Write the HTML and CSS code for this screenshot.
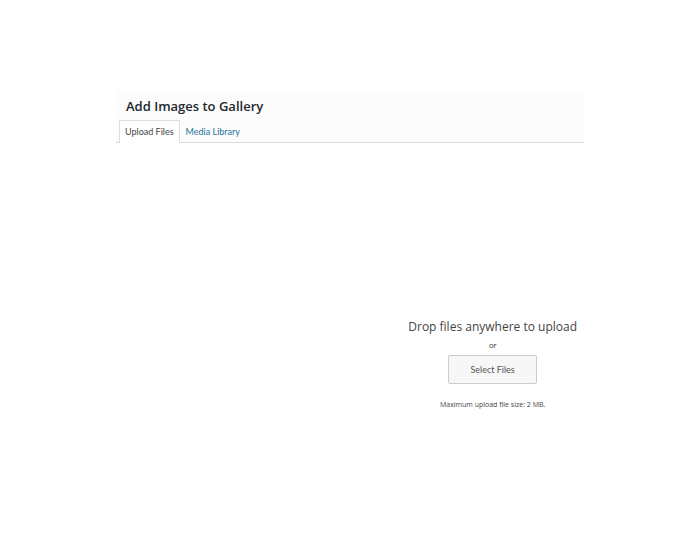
FILE: index.html
```
<!DOCTYPE html>
<html lang="en">
<head>
    <meta charset="UTF-8">
    <meta name="viewport" content="width=device-width, initial-scale=1.0">
    <title>Add Images to Gallery</title>
    <link rel="stylesheet" href="styles.css">
</head>
<body>
    <div class="media-modal">
        <header class="modal-header">
            <h1>Add Images to Gallery</h1>
            <nav class="tabs">
                <a href="#upload" class="tab active">Upload Files</a>
                <a href="#library" class="tab">Media Library</a>
            </nav>
        </header>
        <main class="uploader" id="upload">
            <h2>Drop files anywhere to upload</h2>
            <p class="or">or</p>
            <button type="button" class="select-files">Select Files</button>
            <p class="max-size">Maximum upload file size: 2 MB.</p>
        </main>
    </div>
</body>
</html>
```

FILE: styles.css
```
* {
    box-sizing: border-box;
}
body {
    margin: 0;
    padding: 90px 116px;
    background: #fff;
    color: #444;
    font-family: "Open Sans", "Noto Sans", sans-serif;
}
h1, h2, p {
    margin: 0;
    font-weight: normal;
}
.modal-header {
    background: #fcfcfc;
    border-bottom: 1px solid #ddd;
}
.modal-header h1 {
    padding: 6px 10px 4px;
    color: #23282d;
    font-size: 13px;
    font-weight: 600;
    line-height: 20px;
}
.tabs {
    display: flex;
    padding: 0 3px;
}
.tab {
    padding: 0 5px;
    border: 1px solid transparent;
    border-bottom: none;
    color: #21759b;
    font-family: Lato, sans-serif;
    font-size: 9px;
    line-height: 21px;
    text-decoration: none;
}
.tab.active {
    margin-bottom: -1px;
    padding-bottom: 1px;
    border-color: #ddd;
    background: #fff;
    color: #444;
}
.uploader {
    display: flex;
    flex-direction: column;
    align-items: center;
    width: fit-content;
    margin-left: auto;
    padding: 174px 7px 0 0;
}
.uploader h2 {
    font-size: 12px;
    line-height: 20px;
}
.or {
    padding-bottom: 2px;
    font-family: Lato, sans-serif;
    font-size: 8px;
    line-height: 16px;
}
.select-files {
    width: 89px;
    height: 29px;
    border: 1px solid #ccc;
    border-radius: 2px;
    background: #f7f7f7;
    color: #555;
    font-family: Lato, sans-serif;
    font-size: 9px;
    cursor: pointer;
}
.max-size {
    margin-top: 12px;
    font-size: 7px;
    line-height: 18px;
}
```
